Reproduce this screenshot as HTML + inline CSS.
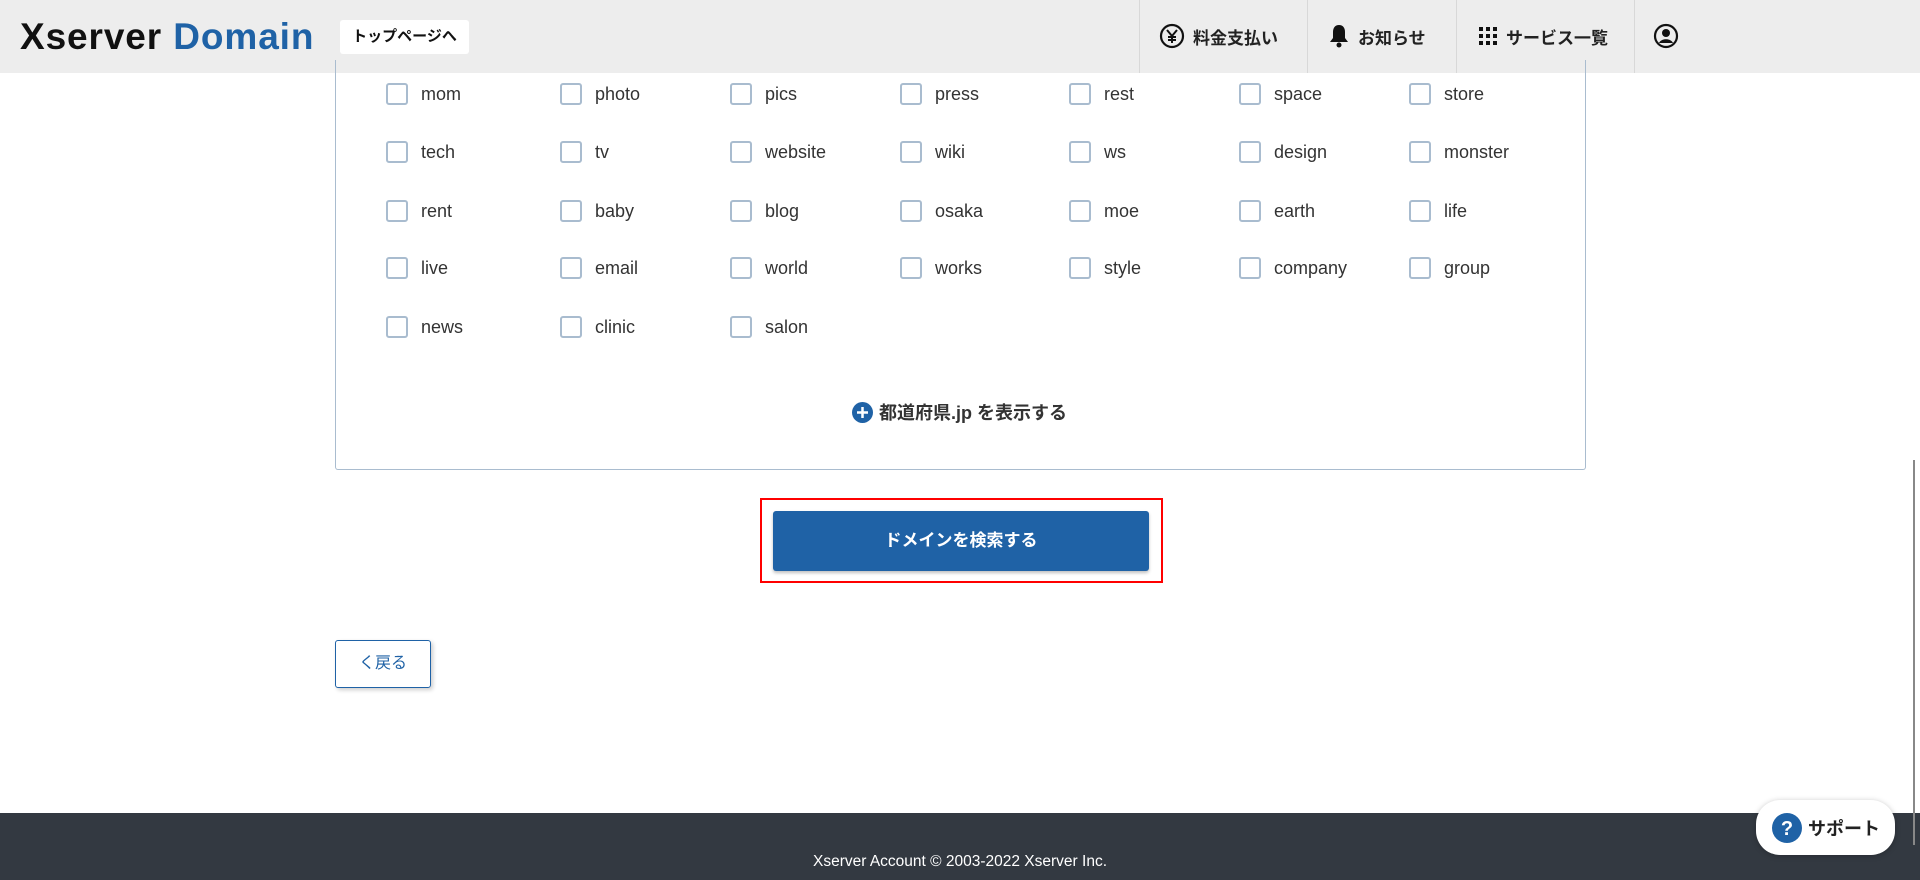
<!DOCTYPE html>
<html><head><meta charset="utf-8"><style>
*{margin:0;padding:0;box-sizing:border-box}
body{width:1920px;height:880px;position:relative;overflow:hidden;background:#fff;font-family:"Liberation Sans","Noto Sans CJK JP",sans-serif;color:#333}
.hdr{position:absolute;left:0;top:0;width:1920px;height:73px;background:#ededed}
.logo{position:absolute;left:20px;top:16px;font-size:37px;font-weight:bold;letter-spacing:0.9px}
.logo .x{color:#111}.logo .d{color:#1f62a6}
.top{position:absolute;left:340px;top:20px;width:129px;height:34px;background:#fff;border-radius:3px;font-size:15px;font-weight:bold;line-height:34px;text-align:center;color:#111}
.sep{position:absolute;top:0;width:1px;height:73px;background:#d8d8d8}
.nav{position:absolute;top:22px;font-size:17px;font-weight:bold;color:#222;display:flex;align-items:center;gap:8px;height:28px}
.box{position:absolute;left:335px;top:60px;width:1251px;height:410px;border:1px solid #a9bccf;border-top:none;border-radius:0 0 3px 3px}
.cb{position:absolute;width:22px;height:22px;border:2px solid #a9bccf;border-radius:3px;background:#fff}
.lb{position:absolute;font-size:18px;color:#333;line-height:22px}
.plus{position:absolute;left:852px;top:399px;display:flex;align-items:center;gap:6px;font-size:18px;font-weight:bold;color:#333}
.red{position:absolute;left:760px;top:498px;width:403px;height:85px;border:2px solid #f00}
.btn{position:absolute;left:773px;top:511px;width:376px;height:60px;background:#1f62a6;border-radius:3px;color:#fff;font-size:17px;font-weight:bold;text-align:center;line-height:60px;box-shadow:0 2px 3px rgba(0,0,0,.25)}
.back{position:absolute;left:335px;top:640px;width:96px;height:48px;border:1px solid #1f62a6;border-radius:3px;color:#1f62a6;font-size:16px;line-height:46px;text-align:center;box-shadow:2px 2px 4px rgba(0,0,0,.2)}
.foot{position:absolute;left:0;top:813px;width:1920px;height:67px;background:#333941;color:#fff;font-size:15.5px;text-align:center}
.sup{position:absolute;left:1756px;top:800px;width:139px;height:55px;background:#fff;border-radius:24px;box-shadow:0 1px 6px rgba(0,0,0,.25);display:flex;align-items:center;padding-left:16px;gap:6px;font-size:18px;font-weight:bold;color:#222}
</style></head><body>
<div class="hdr">
<div class="logo"><span class="x">Xserver</span> <span class="d">Domain</span></div>
<div class="top">トップページへ</div>
<div class="sep" style="left:1139px"></div><div class="sep" style="left:1307px"></div><div class="sep" style="left:1456px"></div><div class="sep" style="left:1634px"></div>
<div class="nav" style="left:1159px"><svg width="26" height="26" viewBox="0 0 26 26"><circle cx="13" cy="13" r="11" fill="none" stroke="#111" stroke-width="2.2"/><path d="M8 7l5 6 5-6M13 13v7M9 14h8M9 17h8" fill="none" stroke="#111" stroke-width="2"/></svg>料金支払い</div>
<div class="nav" style="left:1328px"><svg width="22" height="26" viewBox="0 0 22 26"><path d="M11 2c-4 0-6 3-6 7v6l-3 4h18l-3-4V9c0-4-2-7-6-7z" fill="#111"/><circle cx="11" cy="22" r="2.5" fill="#111"/></svg>お知らせ</div>
<div class="nav" style="left:1478px"><svg width="20" height="20" viewBox="0 0 20 20" fill="#111"><rect x="1" y="1" width="4" height="4"/><rect x="8" y="1" width="4" height="4"/><rect x="15" y="1" width="4" height="4"/><rect x="1" y="8" width="4" height="4"/><rect x="8" y="8" width="4" height="4"/><rect x="15" y="8" width="4" height="4"/><rect x="1" y="15" width="4" height="4"/><rect x="8" y="15" width="4" height="4"/><rect x="15" y="15" width="4" height="4"/></svg>サービス一覧</div>
<div class="nav" style="left:1653px"><svg width="26" height="26" viewBox="0 0 26 26"><circle cx="13" cy="13" r="11" fill="none" stroke="#111" stroke-width="2.2"/><circle cx="13" cy="10" r="4" fill="#111"/><path d="M6 20c2-5 12-5 14 0" fill="#111"/></svg></div>
</div>
<div class="box"></div>
<div id="g"></div>
<div class="plus"><svg width="21" height="21" viewBox="0 0 21 21"><circle cx="10.5" cy="10.5" r="10.5" fill="#1f62a6"/><path d="M10.5 5v11M5 10.5h11" stroke="#fff" stroke-width="2.5"/></svg>都道府県.jp を表示する</div>
<div class="red"></div>
<div class="btn">ドメインを検索する</div>
<div class="back">く戻る</div>
<div class="foot"><div style="position:absolute;left:0;right:0;top:40px">Xserver Account © 2003-2022 Xserver Inc.</div></div>
<div class="sup"><svg width="30" height="30" viewBox="0 0 30 30"><circle cx="15" cy="15" r="15" fill="#1f62a6"/><text x="15" y="22" text-anchor="middle" font-size="20" font-weight="bold" fill="#fff" font-family="Liberation Sans">?</text></svg>サポート</div>
<div style="position:absolute;left:1913px;top:460px;width:2px;height:385px;background:#888"></div>
<script>
var rows=[["mom","photo","pics","press","rest","space","store"],["tech","tv","website","wiki","ws","design","monster"],["rent","baby","blog","osaka","moe","earth","life"],["live","email","world","works","style","company","group"],["news","clinic","salon"]];
var xs=[386,560,730,900,1069,1239,1409],ys=[94,152,211,268,327],h="";
rows.forEach(function(r,i){r.forEach(function(t,j){h+='<div class="cb" style="left:'+xs[j]+'px;top:'+(ys[i]-11)+'px"></div><div class="lb" style="left:'+(xs[j]+35)+'px;top:'+(ys[i]-11)+'px">'+t+'</div>';});});
document.getElementById("g").innerHTML=h;
</script>
</body></html>
